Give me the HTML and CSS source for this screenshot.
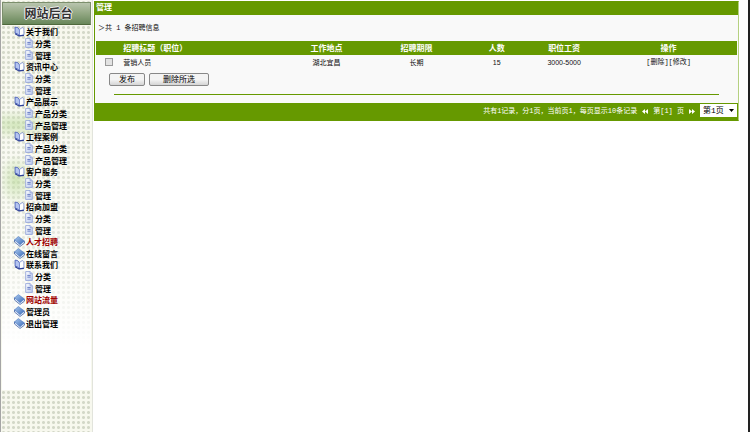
FILE: index.html
```html
<!DOCTYPE html>
<html lang="zh-CN">
<head>
    <meta charset="UTF-8">
    <meta name="viewport" content="width=device-width, initial-scale=1.0">
    <title>网站后台</title>
    <link rel="stylesheet" href="styles.css">
</head>
<body>
    <svg class="sprite" aria-hidden="true">
        <defs>
            <linearGradient id="page-fill" x1="0" y1="0" x2="1" y2="1">
                <stop offset="0" stop-color="#ffffff"/>
                <stop offset="1" stop-color="#b9c9ee"/>
            </linearGradient>
            <linearGradient id="book-fill" x1="0" y1="0" x2="1" y2="1">
                <stop offset="0" stop-color="#a9c8ee"/>
                <stop offset="1" stop-color="#3a6ab8"/>
            </linearGradient>
        </defs>
        <symbol id="icon-open" viewBox="0 0 20 20">
            <path d="M2 2 Q7 1 10 7 L10 18 Q7 13 2 13 Z" fill="#b4c4f0" stroke="#4a60b8" stroke-width="1.6"/>
            <path d="M10 7 Q12 3 16 3 L18 5 L18 16 L10 18 Z" fill="#ffffff" stroke="#6f84cc" stroke-width="1.4"/>
            <path d="M2 14 L9 18 L18 17" fill="none" stroke="#2c3f96" stroke-width="2"/>
        </symbol>
        <symbol id="icon-page" viewBox="0 0 16 18">
            <path d="M2 1 H10 L14 5 V17 H2 Z" fill="url(#page-fill)" stroke="#8d9dd6" stroke-width="1.4"/>
            <path d="M10 1 V5 H14" fill="#dfe6fa" stroke="#7d8fce" stroke-width="1.2"/>
            <path d="M5 8 H11 M5 11 H11" stroke="#5c72c0" stroke-width="1.6"/>
        </symbol>
        <symbol id="icon-book" viewBox="0 0 20 20">
            <path d="M1 7 L1 11 L11 19 L19 13 L19 10 Z" fill="#e8effa" stroke="#2b5099" stroke-width="1.3"/>
            <path d="M1 7 L8 1 L19 9 L11 16 Z" fill="url(#book-fill)" stroke="#4a78c0" stroke-width="1"/>
        </symbol>
    </svg>

    <div class="page">
        <aside class="sidebar">
            <h1 class="logo">网站后台</h1>
            <nav class="menu">
                <ul class="group">
                    <li><a href="#"><svg class="icon"><use href="#icon-open"/></svg>关于我们</a></li>
                    <li class="sub"><a href="#"><svg class="icon-small"><use href="#icon-page"/></svg>分类</a></li>
                    <li class="sub"><a href="#"><svg class="icon-small"><use href="#icon-page"/></svg>管理</a></li>
                </ul>
                <ul class="group">
                    <li><a href="#"><svg class="icon"><use href="#icon-open"/></svg>资讯中心</a></li>
                    <li class="sub"><a href="#"><svg class="icon-small"><use href="#icon-page"/></svg>分类</a></li>
                    <li class="sub"><a href="#"><svg class="icon-small"><use href="#icon-page"/></svg>管理</a></li>
                </ul>
                <ul class="group">
                    <li><a href="#"><svg class="icon"><use href="#icon-open"/></svg>产品展示</a></li>
                    <li class="sub"><a href="#"><svg class="icon-small"><use href="#icon-page"/></svg>产品分类</a></li>
                    <li class="sub"><a href="#"><svg class="icon-small"><use href="#icon-page"/></svg>产品管理</a></li>
                </ul>
                <ul class="group">
                    <li><a href="#"><svg class="icon"><use href="#icon-open"/></svg>工程案例</a></li>
                    <li class="sub"><a href="#"><svg class="icon-small"><use href="#icon-page"/></svg>产品分类</a></li>
                    <li class="sub"><a href="#"><svg class="icon-small"><use href="#icon-page"/></svg>产品管理</a></li>
                </ul>
                <ul class="group">
                    <li><a href="#"><svg class="icon"><use href="#icon-open"/></svg>客户服务</a></li>
                    <li class="sub"><a href="#"><svg class="icon-small"><use href="#icon-page"/></svg>分类</a></li>
                    <li class="sub"><a href="#"><svg class="icon-small"><use href="#icon-page"/></svg>管理</a></li>
                </ul>
                <ul class="group">
                    <li><a href="#"><svg class="icon"><use href="#icon-open"/></svg>招商加盟</a></li>
                    <li class="sub"><a href="#"><svg class="icon-small"><use href="#icon-page"/></svg>分类</a></li>
                    <li class="sub"><a href="#"><svg class="icon-small"><use href="#icon-page"/></svg>管理</a></li>
                </ul>
                <ul class="links">
                    <li><a class="hot" href="#"><svg class="icon"><use href="#icon-book"/></svg>人才招聘</a></li>
                    <li><a href="#"><svg class="icon"><use href="#icon-book"/></svg>在线留言</a></li>
                </ul>
                <ul class="group">
                    <li><a href="#"><svg class="icon"><use href="#icon-open"/></svg>联系我们</a></li>
                    <li class="sub"><a href="#"><svg class="icon-small"><use href="#icon-page"/></svg>分类</a></li>
                    <li class="sub"><a href="#"><svg class="icon-small"><use href="#icon-page"/></svg>管理</a></li>
                </ul>
                <ul class="links">
                    <li><a class="hot" href="#"><svg class="icon"><use href="#icon-book"/></svg>网站流量</a></li>
                    <li><a href="#"><svg class="icon"><use href="#icon-book"/></svg>管理员</a></li>
                    <li><a href="#"><svg class="icon"><use href="#icon-book"/></svg>退出管理</a></li>
                </ul>
            </nav>
        </aside>

        <main class="content">
            <form class="panel" onsubmit="return false">
                <h2 class="panel-title">管理</h2>
                <p class="summary">＞共 1 条招聘信息</p>
                <table class="jobs">
                    <thead>
                        <tr>
                            <th class="col-check"></th>
                            <th class="col-title">招聘标题（职位）</th>
                            <th class="col-place">工作地点</th>
                            <th class="col-term">招聘期限</th>
                            <th class="col-count">人数</th>
                            <th class="col-pay">职位工资</th>
                            <th class="col-action">操作</th>
                        </tr>
                    </thead>
                    <tbody>
                        <tr>
                            <td class="col-check"><input type="checkbox" class="check" aria-label="营销人员"></td>
                            <td class="col-title">营销人员</td>
                            <td>湖北宜昌</td>
                            <td>长期</td>
                            <td>15</td>
                            <td>3000-5000</td>
                            <td class="col-action"><a href="#">[删除]</a><a href="#">[修改]</a></td>
                        </tr>
                    </tbody>
                </table>
                <div class="actions">
                    <button type="button" class="btn">发布</button>
                    <button type="button" class="btn btn-wide">删除所选</button>
                </div>
                <hr class="line">
                <div class="pager">
                    <span>共有1记录，分1页，当前页1，每页显示10条记录</span>
                    <a href="#" aria-label="上一页"><svg class="arrow" viewBox="0 0 12 10"><path d="M6 0 V10 L0 5 Z M12 0 V10 L6 5 Z"/></svg></a>
                    <span>第[1] 页</span>
                    <a href="#" aria-label="下一页"><svg class="arrow" viewBox="0 0 12 10"><path d="M0 0 L6 5 L0 10 Z M6 0 L12 5 L6 10 Z"/></svg></a>
                    <span class="select-box">
                        <select aria-label="页码">
                            <option>第1页</option>
                        </select>
                        <svg class="caret" viewBox="0 0 10 6"><path d="M0 0 H10 L5 6 Z"/></svg>
                    </span>
                </div>
            </form>
        </main>
    </div>
</body>
</html>
```
FILE: styles.css
```css
* {
    box-sizing: border-box;
}

body {
    margin: 0;
    background: #fff;
    color: #111;
    font-family: "Liberation Sans", "Noto Sans CJK SC", sans-serif;
    font-size: 8px;
    line-height: 11px;
}

ul, h1, h2, p {
    margin: 0;
    padding: 0;
    list-style: none;
}

a {
    color: inherit;
    text-decoration: none;
}

.sprite {
    position: absolute;
    width: 0;
    height: 0;
}

.page {
    display: flex;
    min-height: 100vh;
    border-left: 1px solid #a5a5a5;
    border-right: 2px solid #222;
}

/* left menu */
.sidebar {
    flex: 0 0 92px;
    padding: 2px 1px 0 1px;
    border-right: 1px solid #e2e4dc;
    background-color: #f7f8ee;
    background-image: radial-gradient(circle, #d3d8c8 1px, transparent 2px);
    background-size: 5px 5px;
}

.logo {
    height: 23px;
    padding-left: 4px;
    border: 1px solid #7c8f6c;
    border-bottom-color: #4f6a3c;
    background: linear-gradient(#b9c5ae, #92a782 50%, #68875a);
    color: #333;
    font-size: 12px;
    font-weight: bold;
    line-height: 22px;
    text-align: center;
    text-shadow: 1px 0 #eee, -1px 0 #eee, 0 1px #eee, 0 -1px #eee;
}

.menu {
    min-height: 365px;
    padding: 2px 0 0 12px;
    background:
        radial-gradient(ellipse 45px 16px at 14px 100px, rgba(170, 210, 130, 0.45), transparent),
        radial-gradient(ellipse 18px 26px at 14px 155px, rgba(170, 210, 130, 0.5), transparent),
        linear-gradient(rgba(255, 255, 255, 0), rgba(255, 255, 255, 0.4) 60%, #fff 88%);
    color: #000;
    font-weight: bold;
}

.menu a {
    display: flex;
    align-items: center;
    gap: 1px;
    height: 11px;
}

.menu .sub a {
    height: 12px;
    padding-left: 10px;
}

.menu .hot {
    color: #a00000;
}

.links {
    display: grid;
    gap: 1px;
}

.icon {
    width: 11px;
    height: 11px;
    margin-bottom: 3px;
}

.icon-small {
    width: 10px;
    height: 10px;
    margin-bottom: 2px;
}

/* right side */
.content {
    flex: 1;
    padding: 1px 9px 0 1px;
}

.panel {
    border: 1px solid #690;
    border-right-color: #b5d080;
    background: #f9f9f9;
}

.panel-title {
    height: 13px;
    padding-left: 1px;
    background: #690;
    color: #fff;
    font-size: 8px;
    line-height: 12px;
}

.summary {
    padding: 8px 3px 7px;
    font-family: "Liberation Mono", "Noto Sans CJK SC", monospace;
    font-size: 7px;
}

.jobs {
    width: 100%;
    border-collapse: collapse;
    table-layout: fixed;
    border-left: 1px solid #f9f9f9;
    border-right: 1px solid #f9f9f9;
    text-align: center;
}

.jobs th,
.jobs td {
    height: 14px;
    padding: 0;
}

.jobs th {
    background: #690;
    color: #fff;
}

.jobs td {
    font-size: 7px;
}

.jobs .col-title {
    padding-left: 2px;
    text-align: left;
}

.jobs .col-action {
    padding-left: 4px;
}

.jobs td.col-action {
    font-family: "Liberation Mono", "Noto Sans CJK SC", monospace;
}

.col-check {
    width: 4%;
}

.col-title {
    width: 25%;
}

.col-place {
    width: 14%;
}

.col-term {
    width: 14%;
}

.col-count {
    width: 11%;
}

.col-pay {
    width: 10%;
}

.col-action {
    width: 22%;
}

.check {
    appearance: none;
    display: block;
    width: 8px;
    height: 8px;
    margin: 0 0 0 9px;
    border: 1px solid #9a9a9a;
    background: #e2e2e2;
}

.check:checked {
    background: #690;
}

.actions {
    display: flex;
    gap: 4px;
    padding: 4px 14px 8px;
}

.btn {
    width: 36px;
    height: 13px;
    padding: 0;
    border: 1px solid #888;
    border-radius: 2px;
    background: linear-gradient(#f4f4f4 50%, #d4d4d4);
    color: #000;
    font: inherit;
    line-height: 11px;
}

.btn-wide {
    width: 60px;
}

.line {
    height: 1px;
    margin: 0 19px 8px;
    border: 0;
    background: #690;
}

.pager {
    display: flex;
    justify-content: flex-end;
    align-items: center;
    gap: 5px;
    height: 17px;
    padding-right: 1px;
    background: #690;
    color: #fff;
    font-family: "Liberation Mono", "Noto Sans CJK SC", monospace;
    font-size: 7px;
}

.arrow {
    display: block;
    width: 6px;
    height: 5px;
    fill: #fff;
}

.select-box {
    display: grid;
    align-items: center;
    align-self: flex-start;
    margin-top: 1px;
    background: #fff;
}

.select-box select,
.select-box .caret {
    grid-area: 1 / 1;
}

.select-box select {
    appearance: none;
    width: 37px;
    height: 13px;
    padding: 0 3px;
    border: 0;
    background: none;
    color: #000;
    font: inherit;
    font-size: 8px;
}

.caret {
    justify-self: end;
    width: 5px;
    height: 3px;
    margin-right: 3px;
    fill: #000;
    pointer-events: none;
}
```
